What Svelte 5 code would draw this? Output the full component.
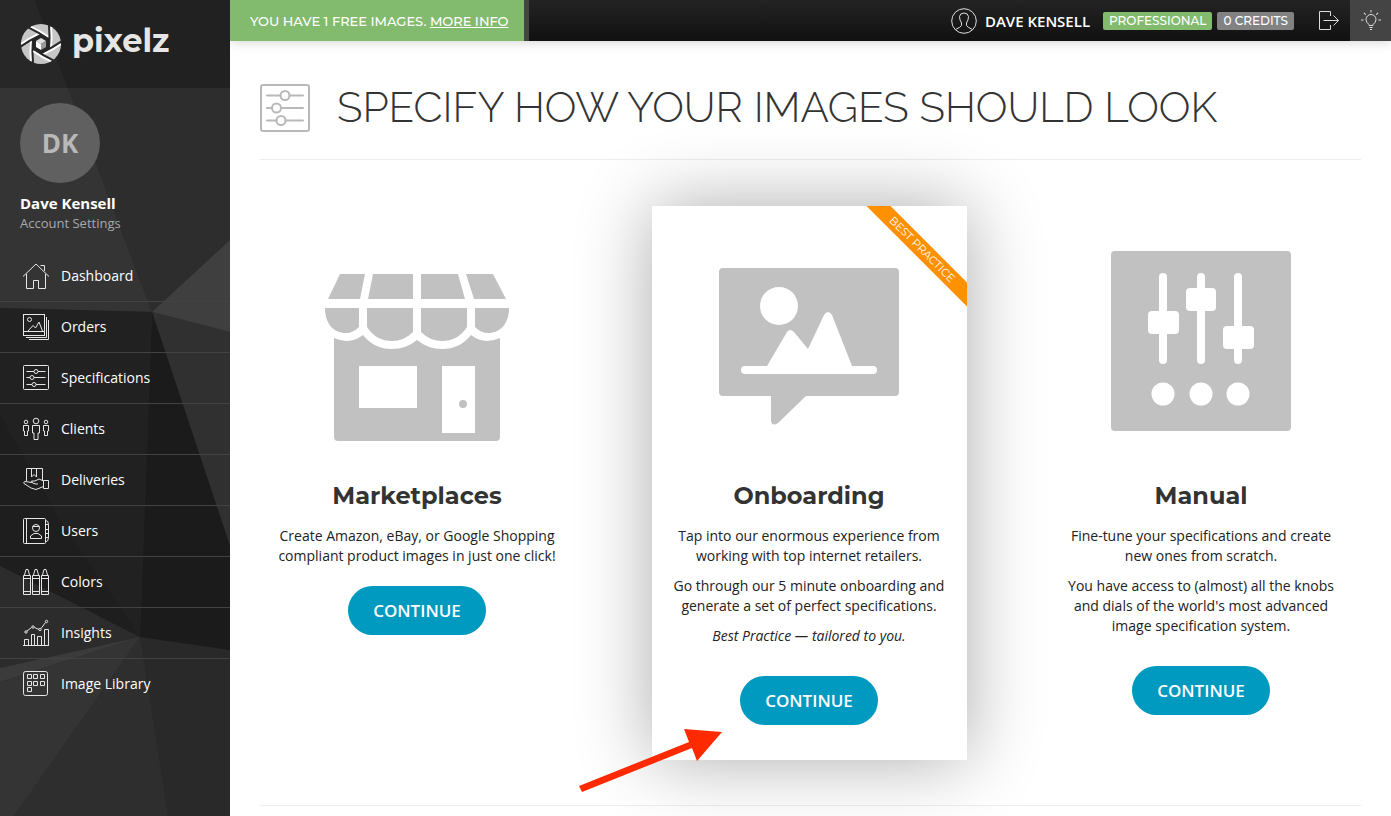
<script lang="ts">
  interface NavItem {
    label: string;
    icon: string;
  }

  const navItems: NavItem[] = [
    { label: 'Dashboard', icon: 'home' },
    { label: 'Orders', icon: 'orders' },
    { label: 'Specifications', icon: 'specs' },
    { label: 'Clients', icon: 'clients' },
    { label: 'Deliveries', icon: 'deliveries' },
    { label: 'Users', icon: 'users' },
    { label: 'Colors', icon: 'colors' },
    { label: 'Insights', icon: 'insights' },
    { label: 'Image Library', icon: 'library' },
  ];

  const user = { name: 'Dave Kensell', initials: 'DK', plan: 'Professional', credits: 0 };
  const freeImages = 1;
  const blades = [0, 60, 120, 180, 240, 300];
  const sunRays = [-90, -45, 0, 180, 225];
</script>

<div class="app">
  <aside class="sidebar">
    <svg class="facets" viewBox="0 0 230 816" preserveAspectRatio="xMidYMin slice" aria-hidden="true">
      <rect width="230" height="816" fill="#292929" />
      <path d="M0 0H35L152 312L0 308Z" fill="#343434" />
      <path d="M35 0H230V240L152 312Z" fill="#2d2d2d" />
      <path d="M230 240V332L152 312Z" fill="#3f3f3f" />
      <path d="M152 312L230 332V546Z" fill="#303030" />
      <path d="M152 312L230 546V650L140 637Z" fill="#1b1b1b" />
      <path d="M0 308L152 312L140 637L0 566Z" fill="#212121" />
      <path d="M0 415L60 520L140 637L0 566Z" fill="#1e1e1e" />
      <path d="M0 566L140 637L0 668Z" fill="#2c2c2c" />
      <path d="M0 668L140 637L0 682Z" fill="#3b3b3b" />
      <path d="M0 682L140 637L14 816H0Z" fill="#343434" />
      <path d="M140 637L168 816H14Z" fill="#2e2e2e" />
    </svg>

    <a class="brand" href="#home">
      <svg width="42" height="42" viewBox="-21 -21 42 42" aria-hidden="true">
        <circle r="20" fill="#c6c6c6" />
        <path d="M-9 -5L0 -10L9 -5V5L0 10L-9 5Z" fill="#272727" />
        {#each blades as angle}
          <g transform="rotate({angle})" fill="none">
            <path d="M-10 -3Q-11 8 -10 17" stroke="#fff" stroke-width="2" />
            <path d="M-8 -5Q-9 8 -8 19" stroke="#272727" stroke-width="2" />
          </g>
        {/each}
        <path d="M-5 -3L0 -6L5 -3L0 0Z" fill="#ddd" />
        <path d="M-5 -3L0 0V6L-5 3Z" fill="#fff" />
        <path d="M5 -3L0 0V6L5 3Z" fill="#999" />
      </svg>
      <span>pixelz</span>
    </a>

    <div class="profile">
      <div class="avatar">{user.initials}</div>
      <strong>{user.name}</strong>
      <a href="#account">Account Settings</a>
    </div>

    <nav>
      <ul>
        {#each navItems as item}
          <li>
            <a href="#{item.icon}">
              <svg class="icon" width="28" height="28" viewBox="0 0 28 28" aria-hidden="true">
                {#if item.icon === 'home'}
                  <path d="M1 14.5L14 2L27 14.5M18.500 3.500H22.500V9M4.500 12V26.500H11.500V18.500H16.500V26.500H23.500V12" />
                {:else if item.icon === 'orders'}
                  <rect x="1.500" y="1.500" width="21" height="21" />
                  <path d="M1.500 18.500H22.500M6 18L11 12.500L13.500 15L17 9L20.500 18M24.500 4V24.500H4M26.500 7V26.500H7" />
                  <circle cx="7.500" cy="6.500" r="2" />
                {:else if item.icon === 'specs'}
                  <rect x="1.500" y="1.500" width="25" height="24" rx="1" />
                  <path d="M4.500 7.500H12M16 7.500H23.500M4.500 13.500H8M12 13.500H23.500M4.500 20.500H10M14 20.500H23.500" />
                  <circle cx="14" cy="7.500" r="2" />
                  <circle cx="10" cy="13.500" r="2" />
                  <circle cx="12" cy="20.500" r="2" />
                {:else if item.icon === 'clients'}
                  <circle cx="14" cy="6" r="2.800" />
                  <circle cx="4" cy="7" r="1.800" />
                  <circle cx="24" cy="7" r="1.800" />
                  <path d="M10.500 10.500H17.500V18H16V24.500H12V18H10.500ZM1.500 10.500H6.500V16H5.500V20.500H2.500V16H1.500ZM21.500 10.500H26.500V16H25.500V20.500H22.500V16H21.500Z" />
                {:else if item.icon === 'deliveries'}
                  <path d="M4.500 15V2.500H20.500V15M9.500 2.500V11L12 8.500L14.500 11V2.500" />
                  <path d="M21.500 14.500H26.500V22.500H21.500ZM21.500 15L17 13L13 15H9.500Q10 18 14 18H16M10 16.500L3 15.500Q1 16 2 17.500L9 22L14 23.500L21.500 20.500" />
                {:else if item.icon === 'users'}
                  <rect x="1.500" y="1.500" width="22" height="25" rx="1" />
                  <path d="M4.500 1.500V26.500M23.500 3.500Q26.500 3.500 26.500 7.500H23.500M26.500 7.500V20.500M23.500 12.500H26.500M23.500 16.500H26.500M23.500 20.500H26.500Q26.500 24.500 23.500 25" />
                  <path d="M8.500 21.500V19L12 16.500H16L19.500 19V21.500ZM10.500 9.500H17.500" />
                  <circle cx="14" cy="11" r="3.500" />
                {:else if item.icon === 'colors'}
                  <path d="M1.500 7.500H8.500V26.500H1.500ZM10.500 7.500H17.500V26.500H10.500ZM19.500 7.500H26.500V26.500H19.500Z" />
                  <path d="M2.500 7L4 1.500H6L7.500 7M11.500 7L13 1.500H15L16.500 7M20.500 7L22 1.500H24L25.500 7M1.500 10.500H8.500M10.500 10.500H17.500M19.500 10.500H26.500M1.500 23.500H8.500M10.500 23.500H17.500M19.500 23.500H26.500" />
                {:else if item.icon === 'insights'}
                  <path d="M1 26.500H27M2.500 26V20.500H6.500V26M9.500 26V15.500H12.500V26M15.500 26V17.500H19.500V26M22.500 26V10.500H26.500V26M5 12L9.500 8.500M12.500 8.500L17 10.500M19 9.500L23.500 3.500" />
                  <circle cx="4" cy="13" r="1.200" />
                  <circle cx="11" cy="8" r="1.200" />
                  <circle cx="18" cy="10.500" r="1.200" />
                  <circle cx="24.500" cy="2.500" r="1.200" />
                {:else}
                  <rect x="1.500" y="1.500" width="24" height="24" rx="2" />
                  <path d="M5.500 4.500H9.500V8.500H5.500ZM11.500 4.500H15.500V8.500H11.500ZM18.500 4.500H22.500V8.500H18.500ZM5.500 11.500H9.500V15.500H5.500ZM11.500 11.500H15.500V15.500H11.500ZM18.500 11.500H22.500V15.500H18.500ZM5.500 17.500H9.500V21.500H5.500Z" />
                {/if}
              </svg>
              {item.label}
            </a>
          </li>
        {/each}
      </ul>
    </nav>
  </aside>

  <div class="page">
    <header class="topbar">
      <div class="notice">
        <span>YOU HAVE {freeImages} FREE IMAGES. <a href="#free">MORE INFO</a></span>
      </div>
      <div class="account">
        <a class="user" href="#profile">
          <svg class="icon" width="26" height="26" viewBox="0 0 26 26" aria-hidden="true">
            <circle cx="13" cy="13" r="12.300" />
            <path d="M10.500 15Q8.500 12 8.500 8.500Q9 5 13 5Q17 5 17.500 8.500Q17.500 12 15.500 15V17.500Q16 19 21.500 21.500M10.500 15V17.500Q10 19 4.500 21.500" />
          </svg>
          <span>{user.name}</span>
        </a>
        <span class="badge plan">{user.plan}</span>
        <span class="badge">{user.credits} Credits</span>
        <button class="logout" aria-label="Log out">
          <svg class="icon" width="22" height="22" viewBox="0 0 22 22" aria-hidden="true">
            <path d="M12.500 6V1.500H1.500V19.500H12.500V15M5.500 10.500H20.500M15.500 5.500L20.500 10.500L15.500 15.500" />
          </svg>
        </button>
        <button class="tips" aria-label="Tips">
          <svg class="icon" width="22" height="22" viewBox="0 0 22 22" aria-hidden="true">
            <path d="M9 15.500V14.500Q6 12.500 6 9.500A5 5 0 0 1 16 9.500Q16 12.500 13 14.500V15.500ZM9.500 17.500H12.500M10 19.500H12" />
            {#each sunRays as angle}
              <path d="M7.500 0H10" transform="translate(11 10) rotate({angle})" />
            {/each}
          </svg>
        </button>
      </div>
    </header>

    <main>
      <div class="heading">
        <svg width="50" height="48" viewBox="0 0 50 48" aria-hidden="true">
          <g fill="none" stroke="#b9b9b9" stroke-width="2" stroke-linecap="round">
            <rect x="1" y="1" width="48" height="46" rx="2" />
            <path d="M7 11.500H20.500M29.500 11.500H43M7 24H12M21 24H43M7 36.500H16.500M25.500 36.500H43" />
            <circle cx="25" cy="11.500" r="4.500" />
            <circle cx="16.500" cy="24" r="4.500" />
            <circle cx="21" cy="36.500" r="4.500" />
          </g>
        </svg>
        <h1>SPECIFY HOW YOUR IMAGES SHOULD LOOK</h1>
      </div>

      <div class="options">
        <section class="card compact">
          <svg class="art" width="190" height="190" viewBox="0 0 190 190" aria-hidden="true">
            <path d="M18 28H43L38 53H6ZM51 28H91V53H46ZM99 28H136L143 53H99ZM144 28H171L184 53H152Z" />
            <path d="M3 62H37V81Q31 87 24 87C11 87 3 77 3 62ZM45 62H91V86Q82 95 70 95Q54 95 45 81ZM99 62H145V81Q136 95 120 95Q108 95 99 86ZM153 62H187C187 77 179 87 166 87Q159 87 153 81Z" />
            <path fill-rule="evenodd" d="M12 92Q28 99 41 89Q52 103 70 103Q84 103 95 94Q106 103 120 103Q138 103 149 89Q162 99 178 92V191Q178 195 174 195H16Q12 195 12 191ZM37 120V162H95V120ZM120 120V187H153V120Z" />
            <circle cx="141" cy="158" r="4" />
          </svg>
          <h2>Marketplaces</h2>
          <p>Create Amazon, eBay, or Google Shopping compliant product images in just one click!</p>
          <button class="continue">CONTINUE</button>
        </section>

        <section class="card featured">
          <div class="ribbon"><span>BEST PRACTICE</span></div>
          <svg class="art" width="190" height="190" viewBox="0 0 190 190" aria-hidden="true">
            <path d="M9 22H181Q185 22 185 26V146Q185 150 181 150H92L64 177Q58 181 57 175V150H9Q5 150 5 146V26Q5 22 9 22Z" />
            <g fill="#fff">
              <circle cx="65" cy="60" r="19" />
              <path d="M31 120H53L73 86Q76 82 80 86L94 103L110 69Q114 63 118 69L138 120H159A4 4 0 0 1 159 128H31A4 4 0 0 1 31 120Z" />
            </g>
          </svg>
          <h2>Onboarding</h2>
          <p>Tap into our enormous experience from working with top internet retailers.</p>
          <p>Go through our 5 minute onboarding and generate a set of perfect specifications.</p>
          <p><em>Best Practice — tailored to you.</em></p>
          <button class="continue">CONTINUE</button>
        </section>

        <section class="card">
          <svg class="art" width="190" height="190" viewBox="0 0 190 190" aria-hidden="true">
            <rect x="5" y="5" width="180" height="180" rx="4" />
            <g fill="#fff">
              <rect x="53" y="27" width="8" height="91" rx="4" />
              <rect x="91" y="27" width="8" height="91" rx="4" />
              <rect x="128" y="27" width="8" height="91" rx="4" />
              <rect x="42" y="65" width="31" height="23" rx="4" />
              <rect x="80" y="42" width="30" height="23" rx="4" />
              <rect x="117" y="80" width="31" height="23" rx="4" />
              <circle cx="57" cy="148" r="11.500" />
              <circle cx="95" cy="148" r="11.500" />
              <circle cx="132" cy="148" r="11.500" />
            </g>
          </svg>
          <h2>Manual</h2>
          <p>Fine-tune your specifications and create new ones from scratch.</p>
          <p>You have access to (almost) all the knobs and dials of the world's most advanced image specification system.</p>
          <button class="continue">CONTINUE</button>
        </section>

        <svg class="pointer" width="144" height="66" viewBox="0 0 144 66" aria-hidden="true">
          <path d="M0 57L110 13L105 0L143 3L118 32L113 19L3 63Z" fill="#ff2a00" />
        </svg>
      </div>
    </main>
  </div>
</div>

<style>
  :global(body) {
    margin: 0;
    background: #fff;
  }
  .app {
    display: flex;
    min-height: 100vh;
    overflow: hidden;
    font-family: 'Open Sans', sans-serif;
    font-size: 14px;
    line-height: 20px;
    color: #222;
  }
  a {
    color: inherit;
    text-decoration: none;
  }
  button {
    border: 0;
    padding: 0;
    color: #fff;
    font-family: inherit;
    cursor: pointer;
  }
  .icon {
    flex: none;
    fill: none;
    stroke: #ddd;
    stroke-width: 1;
  }

  /* Sidebar */
  .sidebar {
    position: relative;
    z-index: 0;
    flex: none;
    width: 230px;
    background: #2a2a2a;
    color: #fff;
    overflow: hidden;
  }
  .facets {
    position: absolute;
    inset: 0;
    z-index: -1;
    width: 100%;
    height: 100%;
  }
  .brand {
    display: flex;
    align-items: center;
    gap: 10px;
    height: 88px;
    padding: 0 20px;
    box-sizing: border-box;
    background: rgba(0, 0, 0, 0.25);
    color: #e6e6e6;
    font-family: Montserrat, Inter, sans-serif;
    font-size: 32px;
    font-weight: 700;
    line-height: 40px;
  }
  .brand span {
    padding-bottom: 6px;
  }
  .profile {
    display: flex;
    flex-direction: column;
    align-items: flex-start;
    padding: 15px 20px 18px;
  }
  .avatar {
    display: grid;
    place-items: center;
    width: 80px;
    height: 80px;
    margin-bottom: 10px;
    border-radius: 50%;
    background: #606060;
    color: #b9b9b9;
    font-size: 26px;
    font-weight: 700;
  }
  .profile strong {
    font-size: 15px;
  }
  .profile a {
    color: #a9a9a9;
    font-size: 13px;
  }
  nav ul {
    margin: 0;
    padding: 0;
    list-style: none;
  }
  nav li + li {
    border-top: 1px solid #414241;
  }
  nav a {
    display: flex;
    align-items: center;
    gap: 11px;
    height: 50px;
    padding-left: 22px;
    font-weight: 500;
  }
  nav .icon {
    stroke: #e6e6e6;
  }

  /* Top bar */
  .page {
    flex: 1;
    min-width: 0;
  }
  .topbar {
    display: flex;
    justify-content: space-between;
    height: 41px;
    background: linear-gradient(#242424, #101010);
    box-shadow: 0 0 12px rgba(0, 0, 0, 0.2);
    color: #fff;
    font-family: Montserrat, Inter, sans-serif;
  }
  .notice {
    display: flex;
    align-items: center;
    padding: 0 15px 0 20px;
    border-right: 5px solid #444;
    background: #82bb6e;
    font-size: 13px;
    font-weight: 500;
  }
  .notice a {
    text-decoration: underline;
  }
  .account,
  .user {
    display: flex;
    align-items: center;
  }
  .user {
    gap: 8px;
    margin-right: 13px;
    font-family: 'Open Sans', sans-serif;
    font-size: 15px;
    font-weight: 600;
    text-transform: uppercase;
  }
  .badge {
    margin-right: 5px;
    padding: 0 6px;
    border-radius: 2px;
    background: #828282;
    font-size: 12px;
    font-weight: 500;
    line-height: 18px;
    text-transform: uppercase;
  }
  .badge.plan {
    background: #82bb6e;
  }
  .logout,
  .tips {
    display: grid;
    place-items: center;
    height: 100%;
    background: none;
  }
  .logout {
    width: 51px;
    padding-left: 8px;
  }
  .tips {
    width: 41px;
    background: #444;
  }

  /* Content */
  main {
    padding: 43px 30px 10px;
  }
  .heading {
    display: flex;
    align-items: center;
    gap: 27px;
    padding-bottom: 27px;
    border-bottom: 1px solid #eee;
  }
  h1 {
    margin: 0;
    color: #333;
    font-family: Raleway, Lato, sans-serif;
    font-size: 42px;
    font-weight: 300;
    line-height: 48px;
    white-space: nowrap;
  }
  .options {
    position: relative;
    display: grid;
    grid-template-columns: repeat(3, 1fr);
    gap: 77px;
    padding: 46px 2px 45px 0;
    border-bottom: 1px solid #eee;
  }
  .card {
    position: relative;
    display: flex;
    flex-direction: column;
    align-items: center;
    padding: 40px 16px 35px 15px;
    text-align: center;
  }
  .featured {
    background: #fff;
    box-shadow: 0 0 70px rgba(0, 0, 0, 0.33);
  }
  .art {
    overflow: visible;
    fill: #c1c1c1;
  }
  h2 {
    margin: 45px 0 15px;
    color: #333;
    font-family: Montserrat, Inter, sans-serif;
    font-size: 24px;
    font-weight: 700;
    line-height: 30px;
  }
  p {
    margin: 0 0 10px;
  }
  .continue {
    width: 138px;
    height: 49px;
    margin-top: 20px;
    border-radius: 25px;
    background: #0099bf;
    font-size: 17px;
    font-weight: 600;
  }
  .compact .continue {
    margin-top: 10px;
  }
  .ribbon {
    position: absolute;
    top: 0;
    right: 0;
    width: 110px;
    height: 110px;
    overflow: hidden;
  }
  .ribbon span {
    position: absolute;
    top: 35px;
    left: -10px;
    width: 150px;
    background: #ff9000;
    color: #fff;
    font-family: Montserrat, Inter, sans-serif;
    font-size: 11px;
    line-height: 17px;
    transform: rotate(45deg);
  }
  .pointer {
    position: absolute;
    bottom: 10px;
    left: 319px;
  }
</style>
